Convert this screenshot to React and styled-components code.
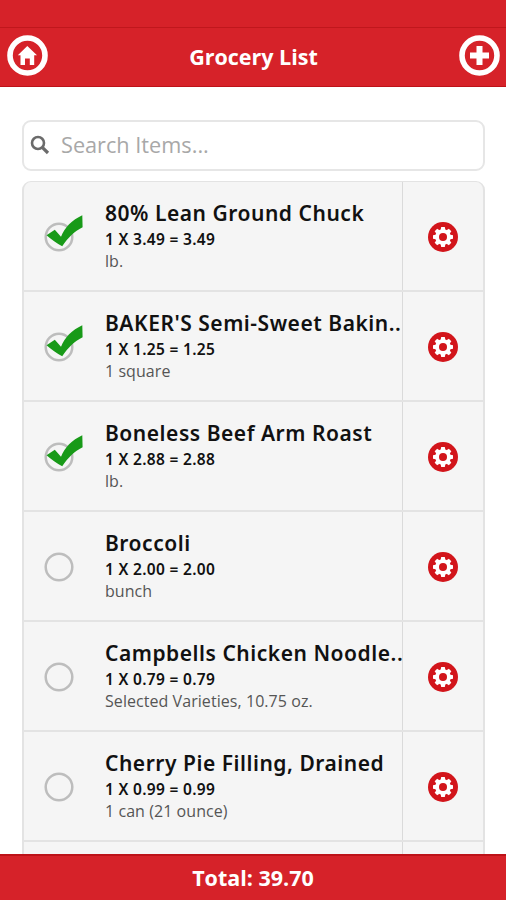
import styled, { createGlobalStyle } from "styled-components";

const GlobalStyle = createGlobalStyle`
  * {
    box-sizing: border-box;
  }

  body {
    margin: 0;
    background: #fff;
    font-family: "Open Sans", "Noto Sans", sans-serif;
  }
`;

const Screen = styled.div`
  display: flex;
  flex-direction: column;
  width: 506px;
  height: 900px;
  overflow: hidden;
`;

const StatusBar = styled.div`
  flex: none;
  height: 28px;
  background: #d62229;
  border-bottom: 1px solid #c0171c;
`;

const Header = styled.header`
  flex: none;
  display: flex;
  align-items: center;
  justify-content: space-between;
  height: 59px;
  padding: 0 6px 4px 7px;
  background: #d62229;
  border-bottom: 1px solid #bd1218;
`;

const RoundButton = styled.button`
  display: block;
  width: 41px;
  height: 41px;
  padding: 0;
  border: none;
  background: none;

  svg {
    display: block;
  }
`;

const Title = styled.h1`
  margin: 4px 0 0;
  font-size: 21.5px;
  line-height: 30px;
  font-weight: 700;
  color: #fff;
`;

const Main = styled.main`
  flex: 1;
  min-height: 0;
  padding: 33px 21px 0 22px;
  overflow: hidden;
`;

const SearchBox = styled.label`
  display: flex;
  align-items: center;
  height: 51px;
  padding: 0 0 2px 6px;
  border: 2px solid #e6e6e6;
  border-radius: 9px;

  svg {
    flex: none;
  }
`;

const SearchInput = styled.input`
  flex: 1;
  min-width: 0;
  margin-left: 11px;
  padding: 0;
  border: none;
  outline: none;
  background: none;
  font-family: inherit;
  font-size: 21.7px;

  &::placeholder {
    color: #a8a8a8;
    opacity: 1;
  }
`;

const List = styled.ul`
  margin: 10px 0 0;
  padding: 0;
  list-style: none;
  background: #f5f5f5;
  border: 2px solid #e3e3e3;
  border-top-width: 1px;
  border-radius: 9px 9px 0 0;
`;

const Row = styled.li`
  display: grid;
  grid-template-columns: 379px 1fr;
  height: 110px;
  border-bottom: 2px solid #e3e3e3;
`;

const Item = styled.div`
  display: flex;
  min-width: 0;
  border-right: 1px solid #dadada;
`;

const Check = styled.span`
  flex: none;
  width: 81px;
  padding: 29.6px 0 0 18px;

  svg {
    display: block;
  }
`;

const Details = styled.div`
  min-width: 0;
  padding-top: 16px;
  white-space: nowrap;
`;

const Name = styled.div`
  font-family: "Noto Sans", "Open Sans", sans-serif;
  font-size: 21px;
  line-height: 30px;
  font-weight: 600;
  letter-spacing: 0.53px;
  color: #111;
`;

const Price = styled.div`
  font-family: "Noto Sans", "Open Sans", sans-serif;
  font-size: 15.5px;
  line-height: 22px;
  font-weight: 600;
  letter-spacing: 0.31px;
  color: #111;
`;

const Note = styled.div`
  font-size: 16px;
  line-height: 22px;
  letter-spacing: 0.06px;
  color: #555;
`;

const Action = styled.div`
  display: flex;
  justify-content: center;
  padding-top: 39.6px;
`;

const Footer = styled.footer`
  flex: none;
  height: 46px;
  background: #d62229;
  border-top: 2px solid #bd1218;
  color: #fff;
  font-size: 21.5px;
  line-height: 43px;
  font-weight: 700;
  text-align: center;
`;

const items = [
  { name: "80% Lean Ground Chuck", price: "1 X 3.49 = 3.49", note: "lb.", checked: true },
  { name: "BAKER'S Semi-Sweet Bakin..", price: "1 X 1.25 = 1.25", note: "1 square", checked: true },
  { name: "Boneless Beef Arm Roast", price: "1 X 2.88 = 2.88", note: "lb.", checked: true },
  { name: "Broccoli", price: "1 X 2.00 = 2.00", note: "bunch" },
  { name: "Campbells Chicken Noodle..", price: "1 X 0.79 = 0.79", note: "Selected Varieties, 10.75 oz." },
  { name: "Cherry Pie Filling, Drained", price: "1 X 0.99 = 0.99", note: "1 can (21 ounce)" },
];

function HomeIcon() {
  return (
    <svg width="41" height="41" viewBox="0 0 41 41">
      <circle cx="20.5" cy="20.5" r="17.5" fill="none" stroke="#fff" strokeWidth="5.6" />
      <path
        d="M20.3 11 30 20.2H27.2V30H22.8V23.5H18V30H13.5V20.2H10.8Z"
        fill="#fff"
      />
    </svg>
  );
}

function PlusIcon() {
  return (
    <svg width="41" height="41" viewBox="0 0 41 41">
      <circle cx="20.5" cy="20.5" r="17.5" fill="none" stroke="#fff" strokeWidth="5.6" />
      <path d="M20.5 11V30M11 20.5H30" stroke="#fff" strokeWidth="6" />
    </svg>
  );
}

function SearchIcon() {
  return (
    <svg width="20" height="20" viewBox="0 0 20 20" fill="none" stroke="#6b6b6b">
      <circle cx="8" cy="8" r="6" strokeWidth="2.6" />
      <path d="M12.3 12.3 18 18" strokeWidth="3.2" />
    </svg>
  );
}

function CheckIcon({ checked }) {
  return (
    <svg width="44" height="44" viewBox="0 0 44 44">
      <circle cx="17" cy="25" r="13.3" fill="none" stroke="#bdbdbd" strokeWidth="2.5" />
      {checked && (
        <path
          d="M4.5 23.3 12.8 17.8 19 24.8C22.5 15.5 30 8 40.3 3.2L40.6 15.3C32 19.5 26.5 25.5 20.2 34.2 15.2 31.5 9 27.5 4.5 23.3Z"
          fill="#189a18"
        />
      )}
    </svg>
  );
}

function GearIcon() {
  return (
    <svg width="30" height="30" viewBox="0 0 30 30">
      <circle cx="15" cy="15" r="15" fill="#d2151b" />
      <g fill="#fff">
        {[0, 45, 90, 135].map((angle) => (
          <path
            key={angle}
            d="M13.2 5H16.8L17.6 9V21L16.8 25H13.2L12.4 21V9Z"
            transform={`rotate(${angle} 15 15)`}
          />
        ))}
        <circle cx="15" cy="15" r="7.8" />
      </g>
      <circle cx="15" cy="15" r="4" fill="#d2151b" />
    </svg>
  );
}

function ItemRow({ item }) {
  return (
    <Row>
      <Item>
        <Check>
          <CheckIcon checked={item.checked} />
        </Check>
        <Details>
          <Name>{item.name}</Name>
          <Price>{item.price}</Price>
          <Note>{item.note}</Note>
        </Details>
      </Item>
      <Action>
        <GearIcon />
      </Action>
    </Row>
  );
}

// empty row that peeks out above the total bar
function NextRow() {
  return (
    <Row>
      <Item />
      <Action />
    </Row>
  );
}

function App() {
  return (
    <>
      <GlobalStyle />
      <Screen>
        <StatusBar />
        <Header>
          <RoundButton aria-label="Home">
            <HomeIcon />
          </RoundButton>
          <Title>Grocery List</Title>
          <RoundButton aria-label="Add">
            <PlusIcon />
          </RoundButton>
        </Header>
        <Main>
          <SearchBox>
            <SearchIcon />
            <SearchInput placeholder="Search Items..." />
          </SearchBox>
          <List>
            {items.map((item) => (
              <ItemRow key={item.name} item={item} />
            ))}
            <NextRow />
          </List>
        </Main>
        <Footer>Total: 39.70</Footer>
      </Screen>
    </>
  );
}

export default App;
